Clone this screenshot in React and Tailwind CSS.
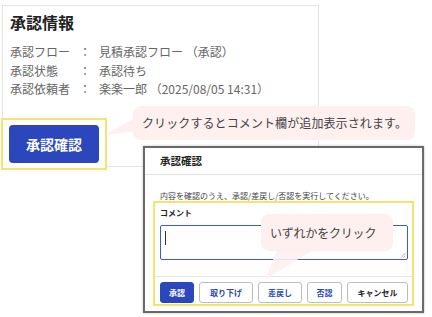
const rows = [
  { label: '承認フロー', value: '見積承認フロー （承認）' },
  { label: '承認状態', value: '承認待ち' },
  { label: '承認依頼者', value: '楽楽一郎 （2025/08/05 14:31）' },
];

const buttons = [
  { text: '承認', w: 'w-[34px]', primary: true },
  { text: '取り下げ', w: 'w-[54px]' },
  { text: '差戻し', w: 'w-[44px]' },
  { text: '否認', w: 'w-[35px]' },
  { text: 'キャンセル', w: 'w-[61px]', dark: true },
];

export default function App() {
  return (
    <div className="relative h-[317px] w-[432px] overflow-hidden bg-white font-['Noto_Sans_CJK_JP',sans-serif]">
      {/* approval info card */}
      <div className="ml-[2px] mt-[5px] h-[162px] w-[317px] border border-[#e4e4e4] pl-[7px] pt-[4px]">
        <h2 className="text-[16px] font-bold leading-[24px] text-[#222]">承認情報</h2>
        <div className="mt-[9px] text-[12px] leading-[18.5px] text-[#666]">
          {rows.map((r) => (
            <div key={r.label} className="flex">
              <span className="w-[69px]">{r.label}</span>
              <span className="w-[12px] text-center">：</span>
              <span className="ml-[8px]">{r.value}</span>
            </div>
          ))}
        </div>
        <div className="-ml-[9px] mt-[19.5px] flex h-[52px] w-[106px] items-center justify-center border-2 border-[#f6e36f] bg-white">
          <button className="h-[38px] w-[90px] rounded-[4px] bg-[#2b47bb] text-[14px] font-bold text-white">
            承認確認
          </button>
        </div>
      </div>

      {/* tooltip 1 */}
      <svg className="absolute left-[104px] top-[115px]" width="32" height="24" viewBox="0 0 32 24">
        <polygon points="1,20 31,3 31,16" fill="#fdf0ef" />
      </svg>
      <div className="absolute left-[133px] top-[106px] flex h-[34px] w-[282px] items-center rounded-[8px] bg-[#fdf0ef] pl-[9px] text-[12px] tracking-[0.1px] text-[#444]">
        クリックするとコメント欄が追加表示されます。
      </div>

      {/* dialog */}
      <div className="absolute left-[143px] top-[146px] h-[167px] w-[281px] border-2 border-[#6a6a6a] bg-white shadow-[0_0_2px_rgba(0,0,0,0.3)]">
        <div className="flex h-[27px] items-center border-b border-[#e2e2e2] pl-[15px] text-[10.5px] font-bold text-[#222]">
          承認確認
        </div>
        <p className="pl-[15px] pt-[15px] text-[8px] leading-[11px] text-[#444]">
          内容を確認のうえ、承認/差戻し/否認を実行してください。
        </p>
        <div className="mx-[8px] border-2 border-[#f6e36f]">
          <div className="pl-[5px] pr-[4px] pt-[4px]">
            <div className="text-[8px] font-bold leading-[12px] text-[#222]">コメント</div>
            <div className="relative mt-[6px] h-[35px] rounded-[2px] border border-[#3a5bd8]">
              <span className="absolute left-[4px] top-[5px] h-[14px] w-px bg-[#333]" />
              <svg className="absolute bottom-[1px] right-[1px]" width="6" height="6" viewBox="0 0 6 6">
                <path d="M5.5 1 L1 5.5 M5.5 3.5 L3.5 5.5" stroke="#999" strokeWidth="0.8" />
              </svg>
            </div>
          </div>
          <div className="mt-[16px] flex gap-[5px] border-t border-[#e6e6e6] pb-[1px] pl-[5px] pt-[5px]">
            {buttons.map((b) => (
              <button
                key={b.text}
                className={
                  b.primary
                    ? `h-[21px] ${b.w} rounded-[3px] border border-[#2b47bb] bg-[#2b47bb] text-[8px] font-bold text-white`
                    : b.dark
                      ? `h-[21px] ${b.w} rounded-[3px] border border-[#bdbdbd] bg-white text-[8px] font-bold text-[#222]`
                      : `h-[21px] ${b.w} rounded-[3px] border border-[#bdbdbd] bg-white text-[8px] font-bold text-[#2b47bb]`
                }
              >
                {b.text}
              </button>
            ))}
          </div>
        </div>
      </div>

      {/* tooltip 2 */}
      <svg className="absolute left-[262px] top-[248px]" width="54" height="34" viewBox="0 0 54 34">
        <polygon points="3,32 15,2 51,2" fill="#fdf0ef" fillOpacity="0.9" />
      </svg>
      <div className="absolute left-[261px] top-[214px] flex h-[37px] w-[132px] items-center rounded-[8px] bg-[#fdf0ef] pl-[9px] text-[12px] tracking-[-0.2px] text-[#444]">
        いずれかをクリック
      </div>
    </div>
  );
}
